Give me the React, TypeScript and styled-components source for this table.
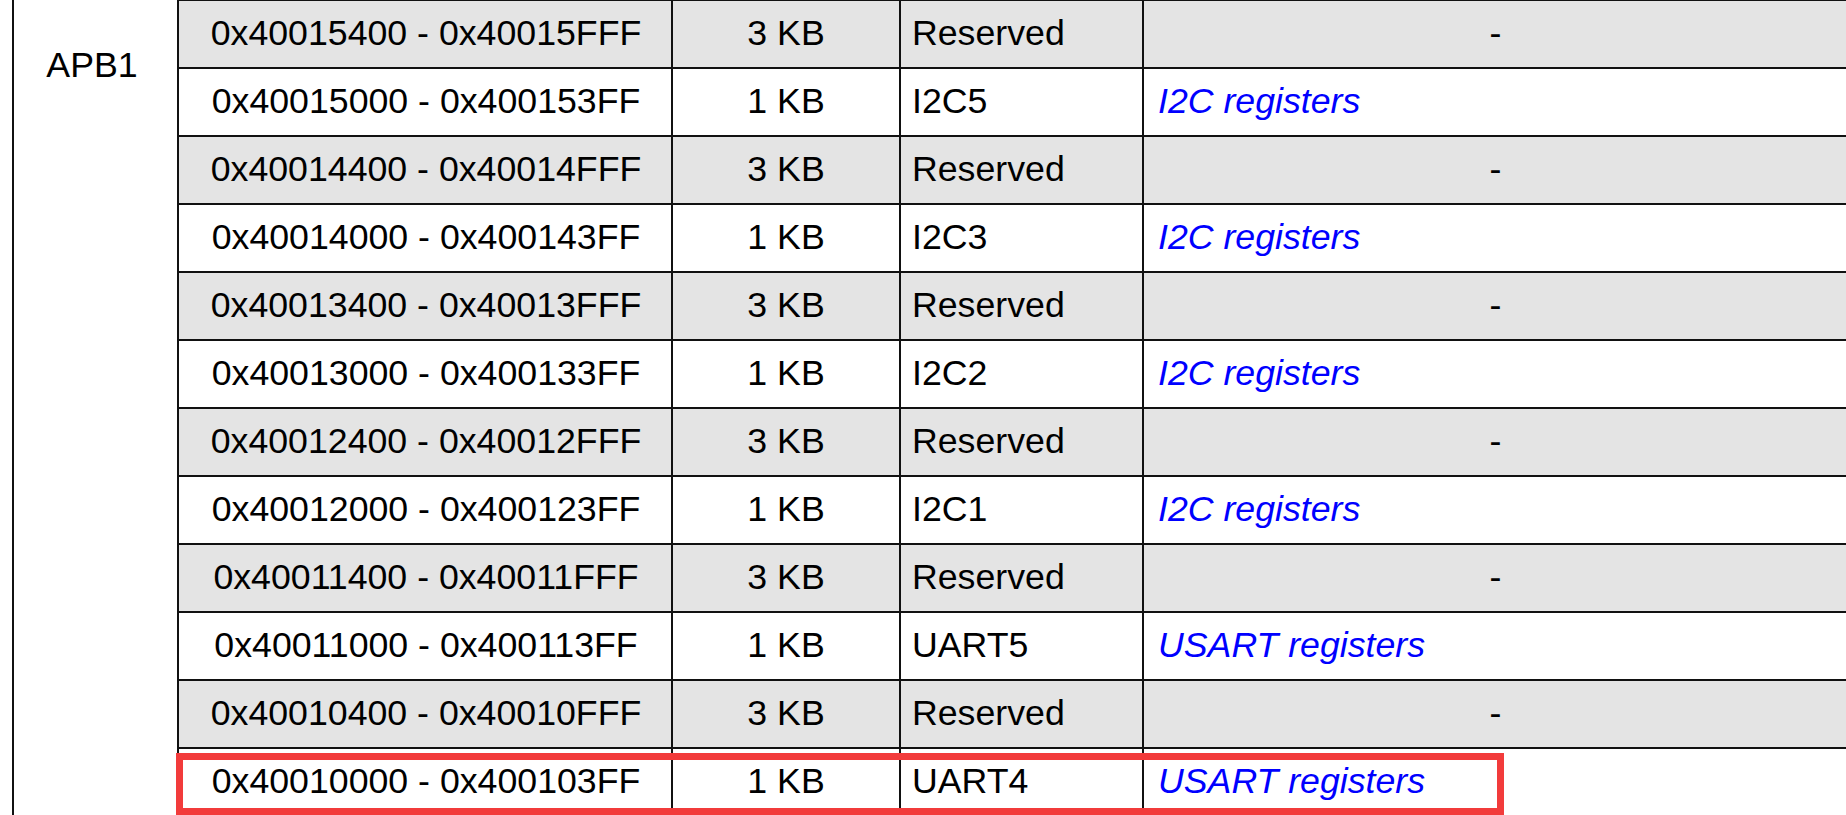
import React from 'react'
import styled, { createGlobalStyle } from 'styled-components'

const GlobalStyle = createGlobalStyle`
  html, body {
    margin: 0;
    padding: 0;
    overflow: hidden;
    background: #ffffff;
  }
  body {
    font-family: 'Liberation Sans', Arial, sans-serif;
  }
`

const Sheet = styled.div`
  position: relative;
  display: grid;
  grid-template-columns: 163px 492px 226px 241px 1fr;
  grid-auto-rows: 66px;
  gap: 2px;
  width: 1835px;
  margin: -1px 0 0 12px;
  padding: 2px 0 0 2px;
  box-sizing: border-box;
  background: #111111;
  font-size: 35.7px;
  color: #000000;
`

const GroupCell = styled.div`
  grid-column: 1;
  grid-row: 1 / span 12;
  margin-top: -2px;
  background: #ffffff;
  text-align: center;
  padding: 46px 7px 0 0;
`

interface CellProps {
  $shaded: boolean
  $align?: 'left' | 'center'
  $pad?: string
}

const Cell = styled.div<CellProps>`
  display: flex;
  align-items: center;
  justify-content: ${props => (props.$align === 'left' ? 'flex-start' : 'center')};
  padding: ${props => props.$pad || '0 0 2px 0'};
  background: ${props => (props.$shaded ? '#e4e4e4' : '#ffffff')};
  white-space: nowrap;
`

const Link = styled.span`
  color: #0000ff;
  font-style: italic;
`

const Highlight = styled.div`
  position: absolute;
  left: 164px;
  top: 754px;
  width: 1328px;
  height: 62px;
  border: 7px solid #f23b3b;
  box-sizing: border-box;
  pointer-events: none;
`

type Row = {
  range: string
  size: string
  name: string
  regs?: string
}

const rows: Row[] = [
  { range: '0x40015400 - 0x40015FFF', size: '3 KB', name: 'Reserved' },
  { range: '0x40015000 - 0x400153FF', size: '1 KB', name: 'I2C5', regs: 'I2C registers' },
  { range: '0x40014400 - 0x40014FFF', size: '3 KB', name: 'Reserved' },
  { range: '0x40014000 - 0x400143FF', size: '1 KB', name: 'I2C3', regs: 'I2C registers' },
  { range: '0x40013400 - 0x40013FFF', size: '3 KB', name: 'Reserved' },
  { range: '0x40013000 - 0x400133FF', size: '1 KB', name: 'I2C2', regs: 'I2C registers' },
  { range: '0x40012400 - 0x40012FFF', size: '3 KB', name: 'Reserved' },
  { range: '0x40012000 - 0x400123FF', size: '1 KB', name: 'I2C1', regs: 'I2C registers' },
  { range: '0x40011400 - 0x40011FFF', size: '3 KB', name: 'Reserved' },
  { range: '0x40011000 - 0x400113FF', size: '1 KB', name: 'UART5', regs: 'USART registers' },
  { range: '0x40010400 - 0x40010FFF', size: '3 KB', name: 'Reserved' },
  { range: '0x40010000 - 0x400103FF', size: '1 KB', name: 'UART4', regs: 'USART registers' },
]

const App = () => {
  return (
    <>
      <GlobalStyle />
      <Sheet>
        <GroupCell>APB1</GroupCell>
        {rows.map(row => {
          const shaded = !row.regs
          return (
            <React.Fragment key={row.range}>
              <Cell $shaded={shaded} $pad="0 0 2px 2px">
                {row.range}
              </Cell>
              <Cell $shaded={shaded}>{row.size}</Cell>
              <Cell $shaded={shaded} $align="left" $pad="0 0 2px 11px">
                {row.name}
              </Cell>
              {row.regs ? (
                <Cell $shaded={shaded} $align="left" $pad="0 0 2px 14px">
                  <Link>{row.regs}</Link>
                </Cell>
              ) : (
                <Cell $shaded={shaded}>-</Cell>
              )}
            </React.Fragment>
          )
        })}
        <Highlight />
      </Sheet>
    </>
  )
}

export default App
